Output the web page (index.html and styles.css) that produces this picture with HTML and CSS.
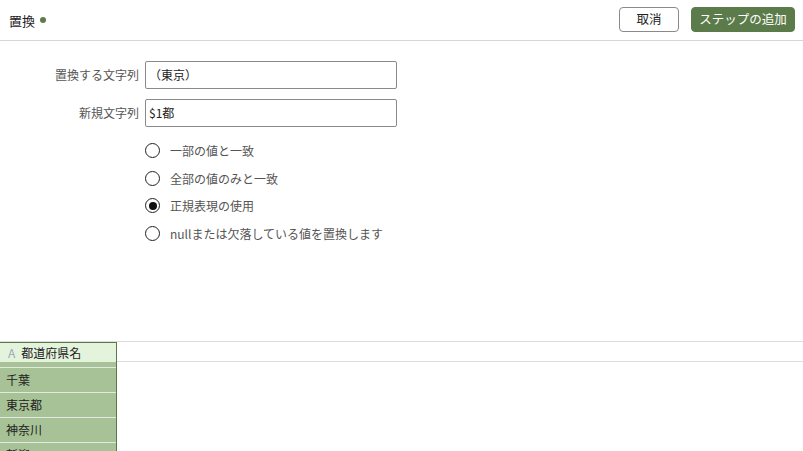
FILE: index.html
```html
<!DOCTYPE html>
<html lang="ja">
<head>
<meta charset="utf-8">
<link rel="stylesheet" href="styles.css">
</head>
<body>
<div class="page">
  <header class="topbar">
    <div class="title">置換<span class="dot"></span></div>
    <div class="actions">
      <button class="btn btn-cancel">取消</button>
      <button class="btn btn-primary">ステップの追加</button>
    </div>
  </header>
  <section class="form">
    <div class="fields">
      <label class="lbl">置換する文字列</label>
      <div class="input">（東京）</div>
      <label class="lbl">新規文字列</label>
      <div class="input">$1都</div>
    </div>
    <ul class="radios">
      <li class="radio"><span class="circle"></span>一部の値と一致</li>
      <li class="radio"><span class="circle"></span>全部の値のみと一致</li>
      <li class="radio"><span class="circle checked"></span>正規表現の使用</li>
      <li class="radio"><span class="circle"></span>nullまたは欠落している値を置換します</li>
    </ul>
  </section>
  <section class="grid">
    <div class="head-row">
      <div class="head-cell"><span class="type">A</span>都道府県名</div>
    </div>
    <div class="body">
      <div class="gap-cell"></div>
      <div class="cell">千葉</div>
      <div class="cell">東京都</div>
      <div class="cell">神奈川</div>
      <div class="cell">新潟</div>
    </div>
  </section>
</div>
</body>
</html>
```
FILE: styles.css
```css
* { box-sizing: border-box; }
html, body { margin: 0; padding: 0; background: #fff; }
body {
  font-family: "Noto Sans CJK JP", "Noto Sans", sans-serif;
  font-size: 12px;
  color: #222;
  width: 803px;
  height: 451px;
  overflow: hidden;
}
.topbar {
  height: 41px;
  border-bottom: 1px solid #d6d6d6;
  display: flex;
  align-items: center;
  justify-content: space-between;
  padding: 0 8px 0 9px;
}
.title {
  font-size: 13px;
  color: #222;
  display: flex;
  align-items: center;
  gap: 5px;
}
.dot {
  width: 6px;
  height: 6px;
  border-radius: 50%;
  background: #5d7b4b;
}
.actions { display: flex; gap: 12px; align-items: center; margin-top: -1px; }
.btn {
  font-family: inherit;
  font-size: 12.5px;
  height: 25px;
  border-radius: 4px;
  line-height: 1;
  padding: 0;
}
.btn-cancel {
  width: 60px;
  background: #fff;
  border: 1px solid #8a8a8a;
  color: #222;
}
.btn-primary {
  width: 104px;
  background: #5c7b4a;
  border: 1px solid #5c7b4a;
  color: #fff;
}
.form {
  height: 300px;
  padding-top: 20px;
}
.fields {
  display: grid;
  grid-template-columns: 139px 252px;
  column-gap: 6px;
  row-gap: 10px;
}
.lbl {
  text-align: right;
  color: #555;
  line-height: 28px;
}
.input {
  height: 28px;
  border: 1px solid #8a8a8a;
  border-radius: 2px;
  padding: 0 5px 0 3px;
  line-height: 26px;
  color: #222;
}
.radios {
  list-style: none;
  margin: 10px 0 0;
  padding: 0 0 0 145px;
}
.radio {
  height: 27.6px;
  display: flex;
  align-items: center;
  color: #555;
}
.circle {
  width: 15px;
  height: 15px;
  border: 1.5px solid #222;
  border-radius: 50%;
  margin-right: 10px;
  display: flex;
  align-items: center;
  justify-content: center;
}
.circle.checked::after {
  content: "";
  width: 8px;
  height: 8px;
  border-radius: 50%;
  background: #111;
}
.grid { width: 803px; }
.head-row {
  height: 21px;
  border-top: 1px solid #dcdcdc;
  border-bottom: 1px solid #dcdcdc;
}
.head-cell {
  width: 117px;
  height: 20px;
  background: #e4f3dc;
  border-top: 1px solid #5b7a4a;
  border-right: 1px solid #5b7a4a;
  padding-left: 8px;
  line-height: 18px;
  color: #222;
  display: flex;
  align-items: center;
}
.type { color: #9aa6b5; margin-right: 6px; font-size: 12px; }
.body { width: 117px; border-right: 1px solid #5b7a4a; }
.gap-cell { height: 5px; background: #a7c296; }
.cell {
  height: 25px;
  border-top: 1px solid #e2e9de;
  background: #a7c296;
  padding-left: 6px;
  line-height: 24px;
  color: #222;
}
```
